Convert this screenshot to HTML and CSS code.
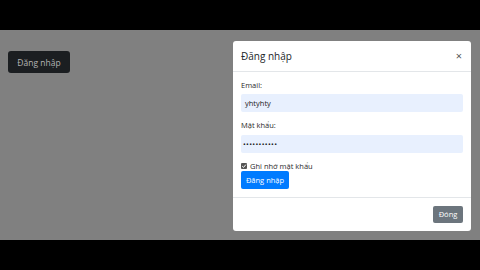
FILE: index.html
```html
<!DOCTYPE html>
<html lang="vi">
<head>
<meta charset="utf-8">
<link rel="stylesheet" href="styles.css">
</head>
<body>
<div class="bar"></div>
<div class="stage">
  <button class="btn-dark">Đăng nhập</button>
  <div class="modal">
    <div class="modal-header">
      <span class="modal-title">Đăng nhập</span>
      <span class="close">×</span>
    </div>
    <div class="modal-body">
      <div class="group">
        <label class="label">Email:</label>
        <div class="input">yhtyhty</div>
      </div>
      <div class="group">
        <label class="label">Mật khẩu:</label>
        <div class="input dots">•••••••••••</div>
      </div>
      <div class="check-row">
        <svg class="checkbox" width="6" height="6" viewBox="0 0 6 6"><rect width="6" height="6" rx="1" fill="#555"/><path d="M1.2 3.1 L2.5 4.4 L4.9 1.6" stroke="#fff" stroke-width="1" fill="none"/></svg>
        <span>Ghi nhớ mật khẩu</span>
      </div>
      <div><button class="btn-primary">Đăng nhập</button></div>
    </div>
    <div class="modal-footer">
      <button class="btn-secondary">Đóng</button>
    </div>
  </div>
</div>
<div class="bar"></div>
</body>
</html>
```
FILE: styles.css
```css
html, body { margin: 0; padding: 0; }
body {
  width: 480px; height: 270px; background: #000;
  font-family: "Open Sans", "Noto Sans", sans-serif;
  display: flex; flex-direction: column; overflow: hidden;
}
.bar { height: 30px; background: #000; flex: none; }
.stage { height: 210px; background: #808080; position: relative; flex: none; }
.btn-dark {
  margin: 21px 0 0 8px; width: 62px; height: 22px; border: 0; border-radius: 3px;
  background: #1b1e21; color: #b4b4b4; font-family: inherit; font-size: 8.5px; padding: 0;
}
.modal {
  position: absolute; left: 233px; top: 11px; width: 238px; height: 190px;
  background: #fff; border-radius: 3px; display: flex; flex-direction: column;
  color: #212529;
}
.modal-header {
  height: 31px; box-sizing: border-box; border-bottom: 1px solid #e3e6e9;
  display: flex; align-items: center; justify-content: space-between; padding: 0 9px 1px 8px;
}
.modal-title { font-size: 10px; }
.close { font-size: 11px; color: #555; }
.modal-body { padding: 8px 8px 0 8px; flex: 1; font-size: 7.5px; }
.group { display: flex; flex-direction: column; margin-bottom: 8px; }
.label { line-height: 10px; margin-bottom: 4px; color: #2b2b2b; }
.input {
  height: 18px; box-sizing: border-box; background: #e8f0fe; border-radius: 2px;
  padding: 0 4px; display: flex; align-items: center; color: #222; font-size: 7.5px;
}
.group + .group .label { margin-bottom: 5px; }
.dots { font-size: 7.5px; letter-spacing: 0.3px; padding-left: 2px; }
.check-row { display: flex; align-items: center; gap: 3px; height: 10px; margin-top: 1px; color: #2b2b2b; }
.checkbox { flex: none; }
.btn-primary {
  margin-top: 0; width: 48px; height: 18px; border: 0; border-radius: 2px; padding: 0;
  background: #007bff; color: #fff; font-family: inherit; font-size: 7.5px;
}
.modal-footer {
  height: 34px; box-sizing: border-box; border-top: 1px solid #e3e6e9;
  display: flex; align-items: center; justify-content: flex-end; padding: 0 8px 1px 0;
}
.btn-secondary {
  width: 30px; height: 17px; border: 0; border-radius: 2px; padding: 0;
  background: #6c757d; color: #fff; font-family: inherit; font-size: 7.5px;
}
```
